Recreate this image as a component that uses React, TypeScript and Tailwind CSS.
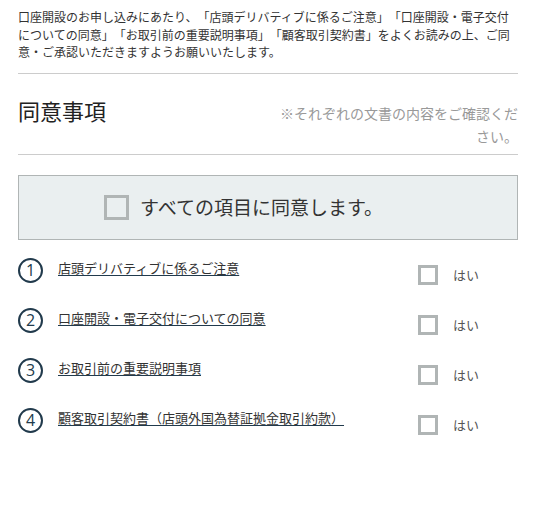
import React from "react";

const items = [
  "店頭デリバティブに係るご注意",
  "口座開設・電子交付についての同意",
  "お取引前の重要説明事項",
  "顧客取引契約書（店頭外国為替証拠金取引約款）",
];

export default function App() {
  return (
    <div
      className="w-[537px] h-[516px] bg-white [text-spacing-trim:space-all]"
      style={{ fontFamily: '"Noto Sans CJK JP", "Noto Sans", sans-serif' }}
    >
      <div className="ml-[18px] w-[500px] pt-[8px]">
        <p className="text-[12px] leading-[17.5px] text-[#333] [text-spacing-trim:space-all]">
          口座開設のお申し込みにあたり、「店頭デリバティブに係るご注意」「口座開設・電子交付についての同意」「お取引前の重要説明事項」「顧客取引契約書」をよくお読みの上、ご同意・ご承認いただきますようお願いいたします。
        </p>
        <div className="mt-[12px] h-px bg-[#cccccc]" />
        <div className="flex justify-between items-start pt-[20px] pb-[6px]">
          <h2 className="text-[22px] leading-[32px] text-[#222] font-normal">同意事項</h2>
          <p className="mt-[8px] w-[242px] text-right text-[14px] leading-[23px] text-[#999]">
            ※それぞれの文書の内容をご確認ください。
          </p>
        </div>
        <div className="h-px bg-[#cccccc]" />
        <div className="mt-[20px] h-[65px] border border-[#b0b5b5] bg-[#eaeff0] flex items-center pl-[85px]">
          <span className="w-[25px] h-[25px] border-[3px] border-[#b0b5b5] bg-[#eaeff0]" />
          <span className="ml-[11px] text-[19px] leading-[24px] text-[#333]">
            すべての項目に同意します。
          </span>
        </div>
        <div className="mt-[18px] flex flex-col">
          {items.map((t, i) => (
            <div key={i} className="flex justify-between h-[50px]">
              <div className="flex items-start">
                <span
                  className="w-[25px] h-[25px] rounded-full border-2 border-[#213a4c] flex items-center justify-center text-[16px] leading-none text-[#213a4c]"
                  style={{ fontFamily: '"Open Sans", sans-serif' }}
                >
                  {i + 1}
                </span>
                <a
                  href="#"
                  className="ml-[15px] mt-0 text-[13px] leading-[20px] text-[#333] underline decoration-[#213a4c] underline-offset-[2px]"
                >
                  {t}
                </a>
              </div>
              <div className="w-[100px] flex items-center h-[20px] mt-[7px]">
                <span className="w-[20px] h-[20px] border-[3px] border-[#b0b5b5]" />
                <span className="ml-[15px] text-[13px] leading-[20px] text-[#555]">はい</span>
              </div>
            </div>
          ))}
        </div>
      </div>
    </div>
  );
}
